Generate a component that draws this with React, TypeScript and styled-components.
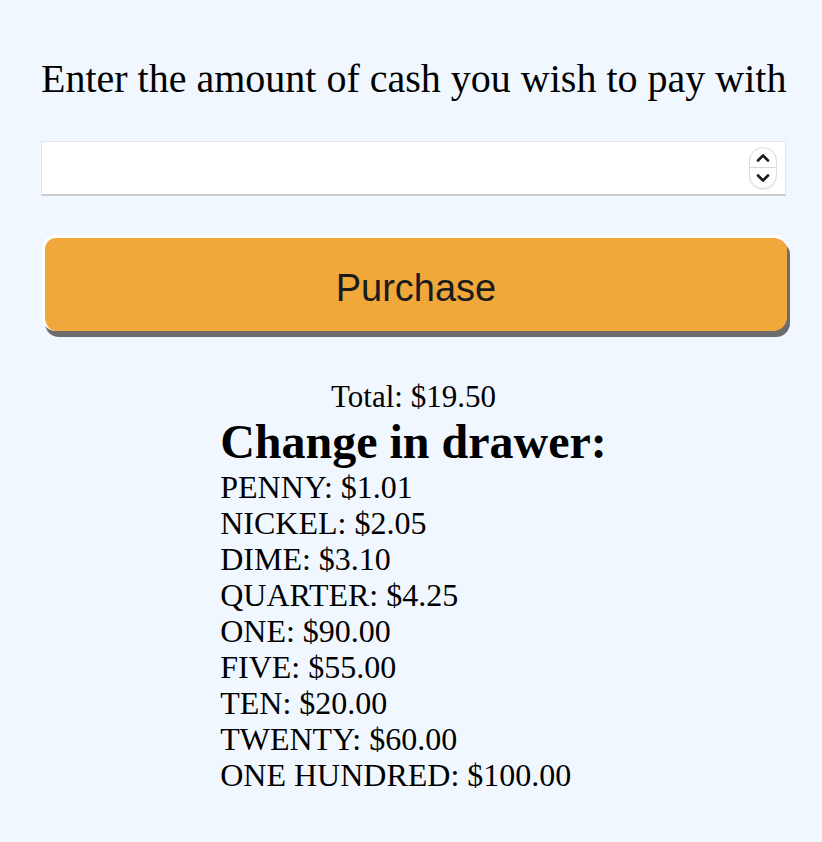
import React from "react";
import styled, { createGlobalStyle } from "styled-components";

const GlobalStyle = createGlobalStyle`
  html, body {
    margin: 0;
    padding: 0;
    background: #f0f7ff;
  }
  body {
    font-family: "Liberation Serif", "Times New Roman", serif;
    color: #000;
  }
`;

const Page = styled.main`
  width: 745px;
  padding: 56px 0 40px 41px;
  display: flex;
  flex-direction: column;
`;

const Prompt = styled.h1`
  margin: 0;
  font-size: 40px;
  font-weight: 400;
  line-height: 46px;
  text-align: center;
  white-space: nowrap;
`;

const InputWrap = styled.div`
  position: relative;
  margin-top: 39px;
  height: 55px;
`;

const CashInput = styled.input`
  box-sizing: border-box;
  width: 100%;
  height: 55px;
  margin: 0;
  padding: 0 12px;
  background: #fff;
  border: 1px solid #e3e6ea;
  border-bottom: 2px solid #c9cbce;
  outline: none;
  font-size: 24px;
  font-family: "Liberation Sans", Arial, sans-serif;
  -moz-appearance: textfield;
  &::-webkit-outer-spin-button,
  &::-webkit-inner-spin-button {
    -webkit-appearance: none;
    margin: 0;
  }
`;

const Spinner = styled.div`
  position: absolute;
  right: 9px;
  top: 6px;
  width: 28px;
  height: 42px;
  box-sizing: border-box;
  border: 1px solid #dcdcdc;
  border-radius: 14px;
  background: #fff;
  box-shadow: 0 1px 1px rgba(0, 0, 0, 0.08);
  display: grid;
  grid-template-rows: 1fr 1fr;
  overflow: hidden;
`;

const SpinHalf = styled.div<{ $top?: boolean }>`
  display: flex;
  align-items: center;
  justify-content: center;
  border-bottom: ${(p) => (p.$top ? "1px solid #d8d8d8" : "none")};
`;

const PurchaseButton = styled.button`
  box-sizing: border-box;
  width: 745px;
  height: 96px;
  margin: 39px 0 0 1px;
  padding: 7px 0 0;
  background: #f0a83b;
  border-style: solid;
  border-color: #fff;
  border-width: 3px 0 0 3px;
  border-radius: 14px;
  box-shadow: 3px 6px 0 #6c6c6c;
  font-family: "Liberation Sans", Arial, Helvetica, sans-serif;
  font-size: 38px;
  color: #1b1b1b;
  cursor: pointer;
`;

const Total = styled.p`
  margin: 48px 0 0;
  font-size: 31px;
  text-align: center;
  line-height: normal;
`;

const Drawer = styled.section`
  align-self: center;
  display: flex;
  flex-direction: column;
`;

const DrawerTitle = styled.h2`
  margin: 0;
  font-size: 48px;
  font-weight: 700;
  line-height: 54px;
  white-space: nowrap;
`;

const DrawerItem = styled.div`
  font-size: 32px;
  line-height: 36px;
  white-space: nowrap;
`;

const drawer: [string, string][] = [
  ["PENNY", "1.01"],
  ["NICKEL", "2.05"],
  ["DIME", "3.10"],
  ["QUARTER", "4.25"],
  ["ONE", "90.00"],
  ["FIVE", "55.00"],
  ["TEN", "20.00"],
  ["TWENTY", "60.00"],
  ["ONE HUNDRED", "100.00"],
];

const Chevron = ({ up }: { up?: boolean }) => (
  <svg width="14" height="9" viewBox="0 0 14 9">
    <path
      d={up ? "M2 7.5 L7 2.5 L12 7.5" : "M2 1.5 L7 6.5 L12 1.5"}
      fill="none"
      stroke="#1e1e1e"
      strokeWidth="2.6"
      strokeLinecap="round"
      strokeLinejoin="round"
    />
  </svg>
);

export default function App() {
  return (
    <>
      <GlobalStyle />
      <Page>
        <Prompt>Enter the amount of cash you wish to pay with</Prompt>
        <InputWrap>
          <CashInput type="number" />
          <Spinner>
            <SpinHalf $top>
              <Chevron up />
            </SpinHalf>
            <SpinHalf>
              <Chevron />
            </SpinHalf>
          </Spinner>
        </InputWrap>
        <PurchaseButton>Purchase</PurchaseButton>
        <Total>Total: $19.50</Total>
        <Drawer>
          <DrawerTitle>Change in drawer:</DrawerTitle>
          {drawer.map(([name, amount]) => (
            <DrawerItem key={name}>
              {name}: ${amount}
            </DrawerItem>
          ))}
        </Drawer>
      </Page>
    </>
  );
}
